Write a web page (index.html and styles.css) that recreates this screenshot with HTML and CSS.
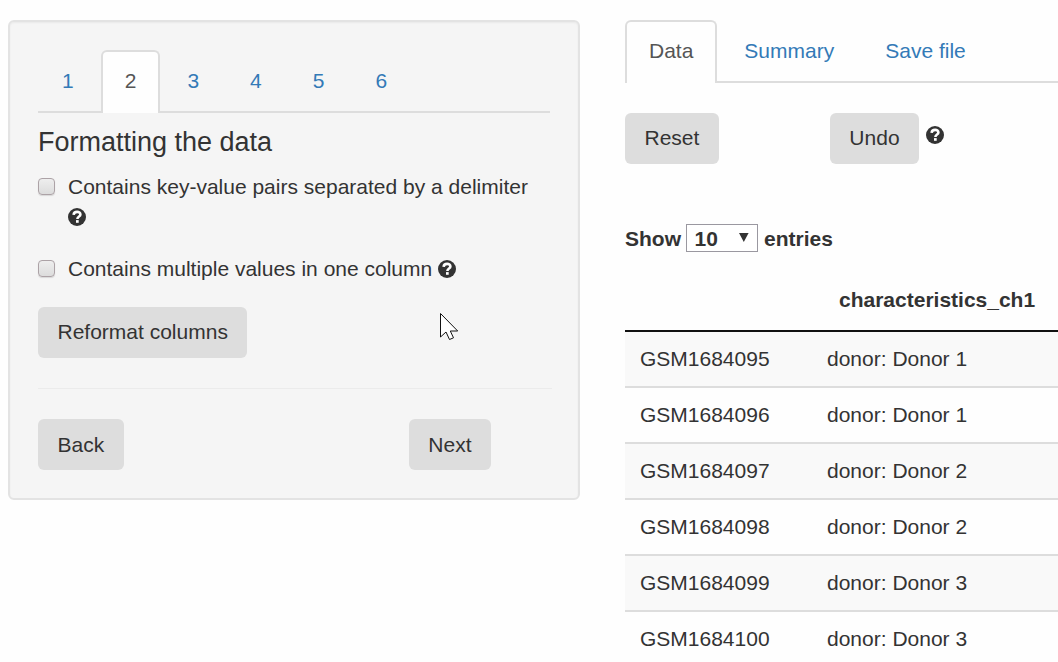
FILE: index.html
```html
<!DOCTYPE html>
<html lang="en">
<head>
<meta charset="utf-8">
<title>Formatting the data</title>
<link rel="stylesheet" href="styles.css">
</head>
<body>
<svg class="defs" width="0" height="0">
  <symbol id="help" viewBox="0 0 18 18">
    <circle cx="9" cy="9" r="9" fill="#333"/>
    <path d="M5.6 6.8C5.8 4.7 7.2 3.9 9.1 3.9C11 3.9 12.4 5 12.4 6.5C12.4 8.7 9.4 8.4 9.4 11" fill="none" stroke="#fff" stroke-width="2.6"/>
    <path d="M8 12.1h2.7v2.7H8z" fill="#fff"/>
  </symbol>
</svg>
<main class="page">
  <section class="well">
    <nav class="tabs">
      <a class="tab">1</a><a class="tab active">2</a><a class="tab">3</a><a class="tab">4</a><a class="tab">5</a><a class="tab">6</a>
    </nav>
    <h4 class="title">Formatting the data</h4>
    <label class="check"><span class="box"></span><span>Contains key-value pairs separated by a delimiter <svg class="help"><use href="#help"/></svg></span></label>
    <label class="check"><span class="box"></span><span>Contains multiple values in one column <svg class="help"><use href="#help"/></svg></span></label>
    <button class="btn reformat">Reformat columns</button>
    <hr class="rule">
    <div class="steps">
      <button class="btn back">Back</button>
      <button class="btn back">Next</button>
    </div>
  </section>
  <section class="content">
    <nav class="tabs">
      <a class="tab active">Data</a><a class="tab">Summary</a><a class="tab">Save file</a>
    </nav>
    <div class="actions">
      <button class="btn reset">Reset</button>
      <button class="btn">Undo</button>
      <svg class="help"><use href="#help"/></svg>
    </div>
    <div class="length">
      <span>Show</span>
      <span class="select">10<svg width="10" height="10" viewBox="0 0 10 10"><path d="M0 0h9.6L4.8 9z" fill="#333"/></svg></span>
      <span>entries</span>
    </div>
    <table class="table">
      <thead><tr><th class="id"></th><th>characteristics_ch1</th></tr></thead>
      <tbody>
        <tr><td>GSM1684095</td><td>donor: Donor 1</td></tr>
        <tr><td>GSM1684096</td><td>donor: Donor 1</td></tr>
        <tr><td>GSM1684097</td><td>donor: Donor 2</td></tr>
        <tr><td>GSM1684098</td><td>donor: Donor 2</td></tr>
        <tr><td>GSM1684099</td><td>donor: Donor 3</td></tr>
        <tr><td>GSM1684100</td><td>donor: Donor 3</td></tr>
      </tbody>
    </table>
  </section>
</main>
<svg class="cursor" width="20" height="28" viewBox="0 0 20 28"><path d="M.5 .5V24L6 19L9.5 26.5L13.5 24.8L10.3 18H17.7Z" fill="#fff" stroke="#111" stroke-width="1"/></svg>
</body>
</html>
```
FILE: styles.css
```css
* { box-sizing: border-box; }
body {
  margin: 0;
  height: 662px;
  overflow: hidden;
  background: #fefefe;
  color: #333;
  font: 21px/30px "Liberation Sans", Arial, sans-serif;
}
.defs { position: absolute; }
.page { display: flex; align-items: flex-start; gap: 45px; padding: 20px 0 0 8px; }
.well {
  flex: none;
  width: 572px;
  height: 480px;
  padding: 28px;
  border: 2px solid #e3e3e3;
  border-radius: 6px;
  background: #f5f5f5;
  box-shadow: inset 0 1px 2px rgba(0, 0, 0, .05);
}
.content { flex: 1; min-width: 0; }
.tabs { display: flex; gap: 3px; height: 63px; border-bottom: 2px solid #ddd; }
.well .tabs { width: 512px; }
.tab {
  height: 63px;
  padding: 14px 22px;
  border: 2px solid transparent;
  border-bottom: 0;
  border-radius: 6px 6px 0 0;
  color: #337ab7;
}
.tab.active { border-color: #ddd; background: #fefefe; color: #555; }
.title { margin: 14px 0 15px; font-size: 27px; font-weight: 400; line-height: 30px; }
.check { display: flex; gap: 13px; width: 512px; margin-bottom: 22px; }
.box {
  flex: none;
  width: 17px;
  height: 17px;
  margin-top: 6px;
  border: 1.5px solid #aca2a6;
  border-radius: 4px;
  background: linear-gradient(#eee, #dcdcdc);
  box-shadow: 0 1px 1px rgba(0, 0, 0, .12);
}
.help { width: 18px; height: 18px; vertical-align: -2px; }
.btn {
  height: 51px;
  padding: 0 19.5px 2px;
  border: 0;
  border-radius: 6px;
  background: #ddd;
  color: #333;
  font: inherit;
}
.reformat { display: block; margin-top: 23px; }
.back { padding-bottom: 0; }
.rule { width: 514px; height: 1px; margin: 30px 0; border: 0; background: #ebebeb; }
.steps { display: flex; justify-content: space-between; width: 453px; }
.actions { display: flex; margin-top: 30px; }
.reset { margin-right: 111px; }
.actions .help { margin: 13px 0 0 6.5px; }
.length { display: flex; align-items: center; height: 30px; margin-top: 60px; font-weight: 700; }
.select {
  display: flex;
  align-items: center;
  justify-content: space-between;
  width: 72px;
  height: 28px;
  margin: -2px 6px 0 5px;
  padding: 2px 8.5px 0 7.5px;
  border: 1px solid #9a98a0;
  background: #fff;
}
.select svg { margin-top: -2px; }
.table { width: 100%; margin-top: 16px; border-collapse: separate; border-spacing: 0; table-layout: fixed; }
.table th { height: 62px; padding: 0 0 0 27px; border-bottom: 2px solid #111; text-align: left; }
.table .id { width: 187px; }
.table td { height: 56px; padding: 0 15px; border-bottom: 2px solid #ddd; }
.table tbody tr:nth-child(odd) { background: #f9f9f9; }
.cursor { position: absolute; left: 440px; top: 313px; }
```
